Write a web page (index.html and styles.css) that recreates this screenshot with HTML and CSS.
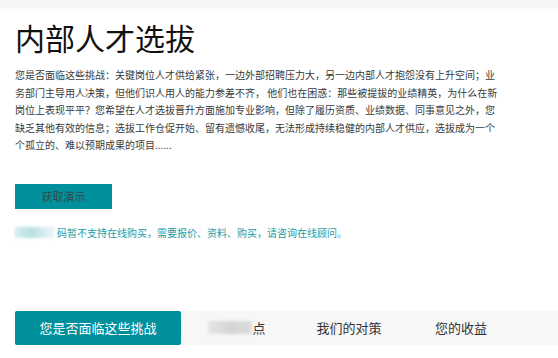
FILE: index.html
```html
<!DOCTYPE html>
<html>
<head>
    <title>内部人才选拔</title>
    <meta charset="utf-8"/>
    <link rel="stylesheet" href="styles.css">
</head>
<body>
    <div class="top-bar"></div>

    <div class="page">
        <h1 class="title">内部人才选拔</h1>

        <p class="intro">您是否面临这些挑战：关键岗位人才供给紧张，一边外部招聘压力大，另一边内部人才抱怨没有上升空间；业务部门主导用人决策，但他们识人用人的能力参差不齐， 他们也在困惑：那些被提拔的业绩精英，为什么在新岗位上表现平平？您希望在人才选拔晋升方面施加专业影响，但除了履历资质、业绩数据、同事意见之外，您缺乏其他有效的信息；选拔工作仓促开始、留有遗憾收尾，无法形成持续稳健的内部人才供应，选拔成为一个个孤立的、难以预期成果的项目......</p>

        <button type="button" class="demo-btn">获取演示</button>

        <p class="notice"><span class="blur blur-teal"></span>码暂不支持在线购买，需要报价、资料、购买，请咨询在线顾问。</p>

        <div class="tabs">
            <div class="tab active">您是否面临这些挑战</div>
            <div class="tab"><span class="blur blur-gray"></span>点</div>
            <div class="tab">我们的对策</div>
            <div class="tab">您的收益</div>
        </div>
    </div>
</body>
</html>
```

FILE: styles.css
```css
body {
    margin: 0px;
    padding: 0px;
    background-color: #fff;
    font-family: "Noto Sans CJK SC", "Noto Sans", sans-serif;
    color: #333;
}

.top-bar {
    height: 8px;
    background-color: #f5f5f5;
    box-shadow: 0 2px 4px rgba(0, 0, 0, 0.03);
}

.page {
    padding-left: 15px;
}

.title {
    margin: 10px 0 0 0;
    font-size: 30px;
    line-height: 38px;
    font-weight: 400;
    color: #111;
}

.intro {
    width: 488px;
    margin: 10px 0 0 0;
    font-size: 10px;
    line-height: 17.6px;
    color: #3a3a3a;
}

.demo-btn {
    display: block;
    margin-top: 30px;
    width: 97px;
    height: 25px;
    border: 0px;
    padding: 0px;
    background-color: #00919d;
    color: #37474a;
    font-family: inherit;
    font-size: 11px;
    cursor: pointer;
}

.notice {
    display: flex;
    align-items: center;
    margin: 16px 0 0 0;
    font-size: 10px;
    line-height: 16px;
    color: #1a9aa6;
}

.blur {
    display: inline-block;
    filter: blur(1.5px);
}

.blur-teal {
    width: 40px;
    height: 11px;
    margin-right: 2px;
    background: linear-gradient(90deg, #d6eef0 0%, #b9dfe3 40%, #d2ecef 70%, #eef7f8 100%);
}

.blur-gray {
    width: 44px;
    height: 13px;
    background: linear-gradient(90deg, #e6e6e6 0%, #d4d4d4 50%, #dcdcdc 100%);
}

.tabs {
    display: flex;
    margin-top: 70px;
    height: 34px;
    background-color: #f7f7f7;
}

.tab {
    display: flex;
    align-items: center;
    justify-content: center;
    width: 112px;
    font-size: 13px;
    color: #333;
}

.tab.active {
    width: 166px;
    background-color: #00909c;
    color: #fff;
    border-radius: 2px;
}
```
